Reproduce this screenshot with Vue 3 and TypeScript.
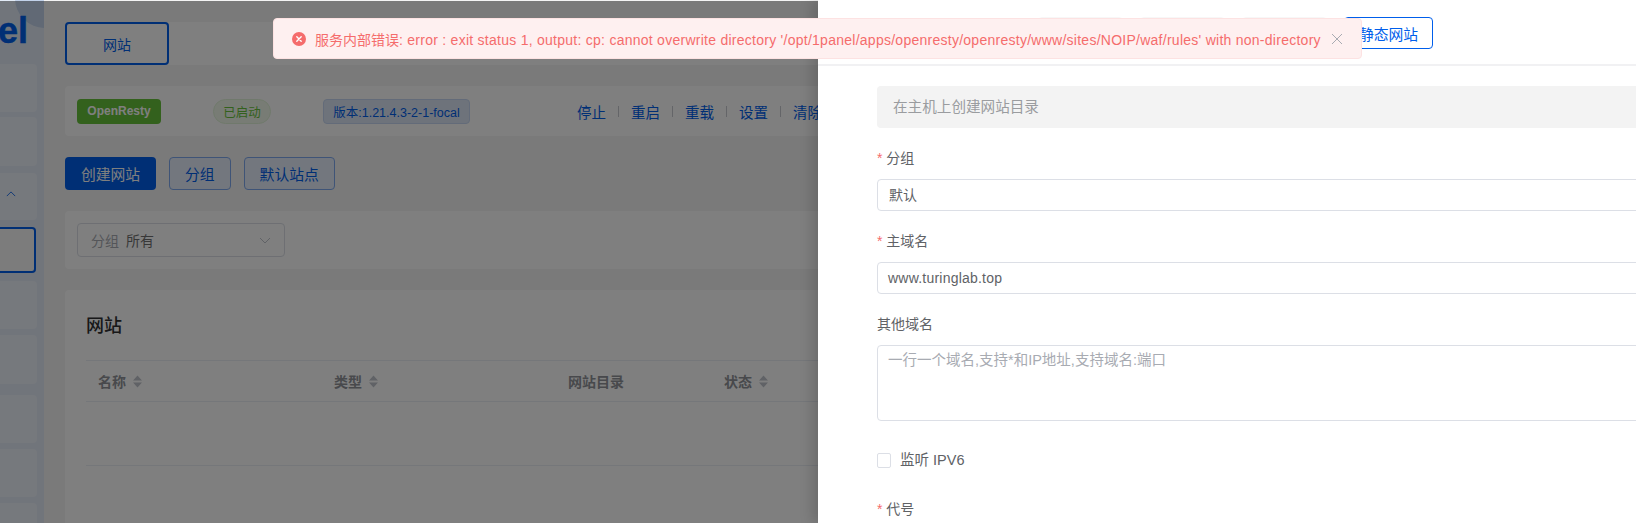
<script setup lang="ts">
const sideItems = [
  { h: 48, gap: 64 },
  { h: 49, gap: 5 },
  { h: 47, gap: 7, chevron: true },
  { h: 46, gap: 7, active: true },
  { h: 48, gap: 8 },
  { h: 49, gap: 6 },
  { h: 48, gap: 11 },
  { h: 48, gap: 6 },
  { h: 48, gap: 6 },
]
const actions = ['停止', '重启', '重载', '设置', '清除缓存']
const columns = [
  { label: '名称', sort: true, width: 236 },
  { label: '类型', sort: true, width: 234 },
  { label: '网站目录', sort: false, width: 156 },
  { label: '状态', sort: true, width: 100 },
]
</script>

<template>
  <div class="screen">
    <div class="page">
      <aside class="sidebar">
        <div class="bubble"></div>
        <div class="logo">el</div>
        <div class="side-list">
          <div
            v-for="(s, i) in sideItems"
            :key="i"
            class="side-item"
            :class="{ 'side-active': s.active }"
            :style="{ height: s.h + 'px', marginTop: s.gap + 'px' }"
          >
            <svg v-if="s.chevron" class="chev" viewBox="0 0 12 7" width="10" height="6"><path d="M1 6l5-5 5 5" fill="none" stroke="#005eeb" stroke-width="1"/></svg>
          </div>
        </div>
      </aside>
      <main class="main">
        <div class="tabbar"><div class="tab">网站</div></div>

        <div class="card status">
          <span class="tag-green">OpenResty</span>
          <span class="pill">已启动</span>
          <span class="version">版本:1.21.4.3-2-1-focal</span>
          <div class="actions">
            <template v-for="(a, i) in actions" :key="a">
              <i v-if="i" class="sep"></i>
              <span class="action">{{ a }}</span>
            </template>
          </div>
        </div>

        <div class="btns">
          <span class="btn primary">创建网站</span>
          <span class="btn plain">分组</span>
          <span class="btn plain">默认站点</span>
        </div>

        <div class="card filter">
          <div class="select">
            <span class="sel-label">分组</span>
            <span class="sel-value">所有</span>
            <svg class="sel-arrow" viewBox="0 0 12 7" width="12" height="7"><path d="M1 1l5 5 5-5" fill="none" stroke="#c0c4cc" stroke-width="1"/></svg>
          </div>
        </div>

        <div class="card table-card">
          <div class="title">网站</div>
          <div class="thead">
            <div v-for="c in columns" :key="c.label" class="th" :style="{ width: c.width + 'px' }">
              {{ c.label }}
              <svg v-if="c.sort" class="sort" viewBox="0 0 11 13" width="11" height="13">
                <path d="M5.5 0.5l4.5 5H1zM5.5 12.5L1 7.5h9z" fill="#c0c4cc"/>
              </svg>
            </div>
          </div>
          <div class="tbody"></div>
        </div>
      </main>
    </div>

    <div class="mask"></div>

    <section class="drawer">
      <header class="drawer-head">
        <span class="ghost"></span>
        <span class="ghost"></span>
        <span class="ghost"></span>
        <span class="static-btn">静态网站</span>
      </header>
      <div class="form">
        <div class="hint">在主机上创建网站目录</div>

        <label class="label"><em>*</em> 分组</label>
        <div class="input">默认</div>

        <label class="label"><em>*</em> 主域名</label>
        <div class="input latin">www.turinglab.top</div>

        <label class="label">其他域名</label>
        <div class="textarea">一行一个域名,支持*和IP地址,支持域名:端口</div>

        <div class="check"><span class="box"></span><span class="check-text">监听 IPV6</span></div>

        <label class="label code"><em>*</em> 代号</label>
      </div>
    </section>

    <div class="message">
      <svg class="msg-icon" viewBox="0 0 14 14" width="14" height="14">
        <circle cx="7" cy="7" r="7" fill="#f56c6c"/>
        <path d="M4.8 4.8l4.4 4.4M9.2 4.8l-4.4 4.4" stroke="#fff" stroke-width="1.4" stroke-linecap="round"/>
      </svg>
      <span class="msg-text">服务内部错误<span class="msg-latin">: error : exit status 1, output: cp: cannot overwrite directory '/opt/1panel/apps/openresty/openresty/www/sites/NOIP/waf/rules' with non-directory</span></span>
      <svg class="msg-close" viewBox="0 0 12 12" width="12" height="12">
        <path d="M1 1l10 10M11 1L1 11" stroke="#a8abb2" stroke-width="1"/>
      </svg>
    </div>
  </div>
</template>

<style scoped>
.screen {
  position: relative;
  width: 1636px;
  height: 523px;
  overflow: hidden;
  font-family: "Liberation Sans", "Noto Sans CJK SC", sans-serif;
  font-size: 14px;
  background: #f4f4f4;
}
.page { display: flex; height: 523px; }
.sidebar {
  position: relative;
  width: 44px;
  flex: none;
  overflow: hidden;
  background: #e2ebf7;
}
.bubble {
  position: absolute;
  left: 15px;
  top: -32px;
  width: 60px;
  height: 60px;
  border-radius: 50%;
  background: #c2d2ea;
}
.logo {
  position: absolute;
  right: 16px;
  top: 11px;
  font-size: 36px;
  line-height: 40px;
  font-weight: 700;
  color: #005eeb;
  -webkit-text-stroke: 0.5px #005eeb;
}
.side-list {
  display: flex;
  flex-direction: column;
  width: 37px;
}
.side-item {
  position: relative;
  flex: none;
  box-sizing: border-box;
  background: #edf2fa;
  border-radius: 0 4px 4px 0;
}
.chev { position: absolute; left: 6px; top: 18px; }
.side-active {
  width: 36px;
  background: #f8f8f8;
  border: 2px solid #005eeb;
  border-left: 0;
}
.main { flex: 1; min-width: 0; padding: 22px 0 0 21px; }
.tabbar {
  height: 43px;
  background: #fff;
  border-radius: 4px 0 0 4px;
}
.tab {
  box-sizing: border-box;
  width: 104px;
  height: 43px;
  display: flex;
  align-items: center;
  justify-content: center;
  border: 2px solid #005eeb;
  border-radius: 4px;
  color: #005eeb;
  font-size: 14px;
}
.card {
  background: #fff;
  border-radius: 4px;
}
.status {
  height: 50px;
  margin-top: 21px;
  display: flex;
  align-items: center;
  padding-left: 12px;
  white-space: nowrap;
}
.tag-green {
  box-sizing: border-box;
  width: 84px;
  height: 25px;
  display: flex;
  align-items: center;
  justify-content: center;
  background: #67c23a;
  color: #fff;
  border-radius: 4px;
  font-size: 12px;
  font-weight: 700;
}
.pill {
  box-sizing: border-box;
  width: 58px;
  height: 25px;
  margin-left: 52px;
  display: flex;
  align-items: center;
  justify-content: center;
  border: 1px solid #e1f3d8;
  background: #f0f9eb;
  color: #67c23a;
  border-radius: 13px;
  font-size: 12.5px;
}
.version {
  box-sizing: border-box;
  width: 147px;
  height: 25px;
  margin-left: 52px;
  display: flex;
  align-items: center;
  justify-content: center;
  border: 1px solid #c6d7f2;
  background: #dde7f7;
  color: #005eeb;
  border-radius: 4px;
  font-size: 12.5px;
}
.actions {
  display: flex;
  align-items: center;
  margin-left: 107px;
}
.action { color: #005eeb; font-size: 14.5px; }
.sep { width: 1px; height: 11px; margin: 0 12px; background: #c8cbd1; }
.btns { display: flex; gap: 13px; margin-top: 21px; }
.btn {
  box-sizing: border-box;
  height: 33px;
  display: flex;
  align-items: center;
  justify-content: center;
  border-radius: 4px;
  font-size: 14.8px;
}
.primary { width: 91px; background: #005eeb; color: #fff; }
.plain {
  padding: 0 15px;
  border: 1px solid #7fa9ef;
  background: #e6effc;
  color: #005eeb;
}
.filter { height: 58px; margin-top: 21px; padding: 12px; box-sizing: border-box; }
.select {
  box-sizing: border-box;
  position: relative;
  width: 208px;
  height: 34px;
  display: flex;
  align-items: center;
  padding-left: 13px;
  border: 1px solid #dcdfe6;
  border-radius: 4px;
}
.sel-label { color: #a8abb2; margin-right: 7px; }
.sel-value { color: #707070; }
.sel-arrow { position: absolute; right: 13px; top: 13px; }
.table-card { height: 260px; margin-top: 21px; padding: 0 21px; }
.title {
  height: 70px;
  line-height: 72px;
  font-size: 18px;
  font-weight: 500;
  color: #303133;
}
.thead {
  display: flex;
  height: 42px;
  box-sizing: border-box;
  border-top: 1px solid #ebeef5;
  border-bottom: 1px solid #ebeef5;
  margin-right: -30px;
}
.th {
  display: flex;
  align-items: center;
  gap: 6px;
  padding-left: 12px;
  box-sizing: border-box;
  color: #909399;
  font-size: 14px;
  font-weight: 700;
  flex: none;
}
.tbody { height: 63px; border-bottom: 1px solid #ebeef5; margin-right: -30px; }
.mask {
  position: absolute;
  inset: 1px 0 0 0;
  background: rgba(0, 0, 0, 0.5);
}
.drawer {
  position: absolute;
  left: 818px;
  top: 0;
  width: 818px;
  height: 523px;
  overflow: hidden;
  background: #fff;
  box-shadow: -6px 0 12px rgba(0, 0, 0, 0.15);
}
.drawer-head {
  height: 66px;
  box-sizing: border-box;
  border-bottom: 2px solid #f1f1f3;
  padding: 17px 0 0 220px;
  display: flex;
  gap: 17px;
}
.ghost {
  width: 85px;
  height: 32px;
  border: 1px solid #f7f7f7;
  border-radius: 4px;
  box-sizing: border-box;
}
.static-btn {
  box-sizing: border-box;
  width: 89px;
  height: 32px;
  display: flex;
  align-items: center;
  justify-content: center;
  border: 1px solid #005eeb;
  border-radius: 4px;
  color: #005eeb;
  font-size: 14.8px;
}
.form {
  display: flex;
  flex-direction: column;
  width: 900px;
  padding: 20px 0 0 59px;
  box-sizing: border-box;
}
.hint {
  height: 42px;
  line-height: 42px;
  padding-left: 16px;
  background: #f3f3f3;
  border-radius: 4px;
  color: #9a9c9f;
  font-size: 14.6px;
}
.label {
  display: block;
  height: 20px;
  line-height: 20px;
  margin-top: 20px;
  margin-bottom: 11px;
  color: #606266;
  font-size: 14px;
}
.label em { font-style: normal; color: #f56c6c; }
.input {
  box-sizing: border-box;
  height: 32px;
  line-height: 30px;
  padding-left: 11px;
  border: 1px solid #dcdfe6;
  border-radius: 4px;
  color: #606266;
  font-size: 14px;
}
.latin { padding-left: 10px; letter-spacing: 0.22px; }
.textarea {
  box-sizing: border-box;
  height: 76px;
  padding: 4px 10px;
  line-height: 20px;
  border: 1px solid #dcdfe6;
  border-radius: 4px;
  color: #a8abb2;
  font-size: 14.5px;
}
.check {
  display: flex;
  align-items: center;
  height: 20px;
  margin-top: 29px;
  color: #606266;
  font-size: 14.5px;
}
.check-text { margin-top: -3px; }
.box {
  box-sizing: border-box;
  width: 14px;
  height: 15px;
  margin-right: 9px;
  border: 1px solid #dcdfe6;
  border-radius: 2px;
}
.code { margin-top: 29px; }
.message {
  position: absolute;
  left: 273px;
  top: 18px;
  box-sizing: border-box;
  width: 1089px;
  height: 41px;
  display: flex;
  align-items: center;
  padding-left: 18px;
  background: #fef0f0;
  border: 1px solid #fde2e2;
  border-radius: 4px;
  white-space: nowrap;
}
.msg-icon { flex: none; }
.msg-text { margin-left: 9px; color: #f56c6c; font-size: 14px; }
.msg-latin { letter-spacing: 0.26px; }
.msg-close { position: absolute; right: 18px; top: 14px; }
</style>
